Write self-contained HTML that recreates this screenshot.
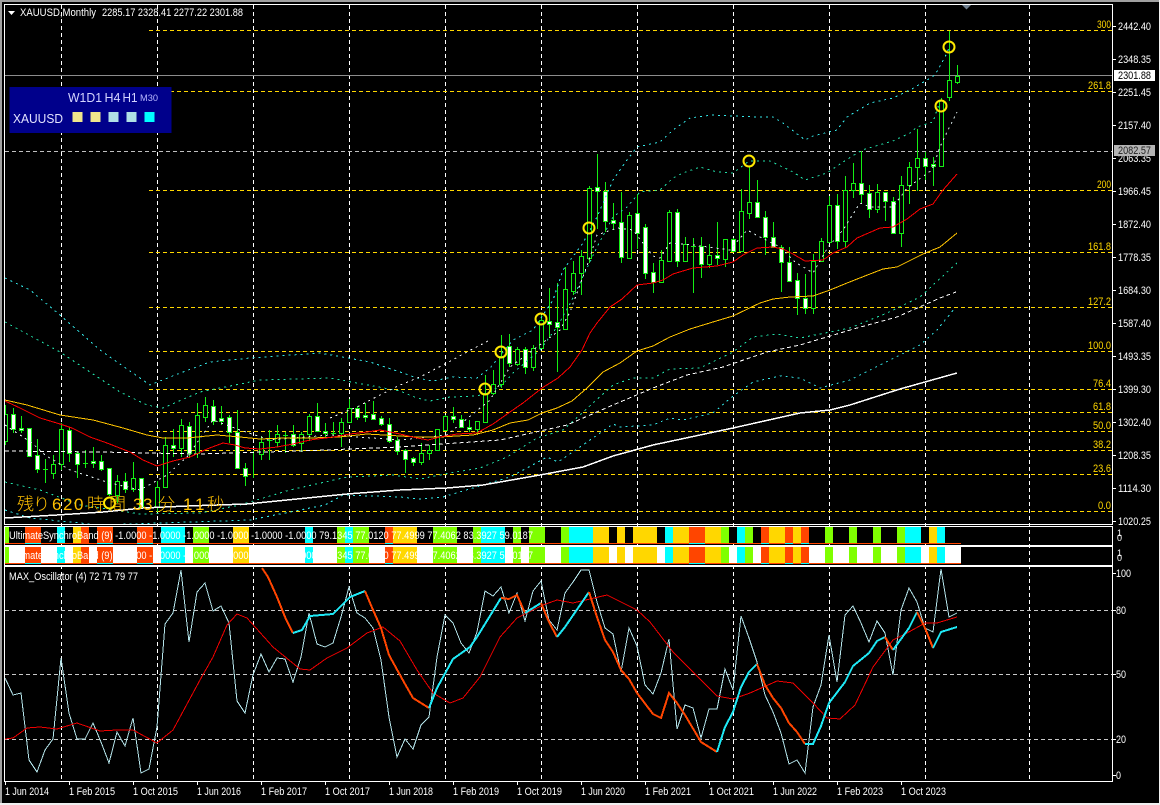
<!DOCTYPE html>
<html><head><meta charset="utf-8"><title>XAUUSD Monthly</title>
<style>
html,body{margin:0;padding:0;background:#000;width:1160px;height:805px;overflow:hidden}
svg{display:block;position:absolute;left:0;top:0}
text{font-family:"Liberation Sans","Noto Sans CJK JP",sans-serif;font-size:11px;fill:#fff}
.g{fill:#ffd700}
polyline{fill:none;shape-rendering:crispEdges}
.d{stroke-width:1;stroke-dasharray:2 4}
</style></head><body>
<svg width="1160" height="805" viewBox="0 0 1160 805" xmlns="http://www.w3.org/2000/svg">
<defs>
<clipPath id="m"><rect x="5" y="5" width="1107" height="519"/></clipPath>
<clipPath id="o"><rect x="5" y="567" width="1107" height="214"/></clipPath>
</defs>
<rect width="1160" height="805" fill="#000"/>
<rect width="1160" height="2" fill="#a0a0a0"/><rect width="2" height="805" fill="#a0a0a0"/>
<rect y="803" width="1160" height="2" fill="#f0f0f0"/><rect x="1159" width="1" height="805" fill="#f0f0f0"/>

<!-- vertical grid -->
<path d="M61.5 5V781M157.5 5V781M253.5 5V781M349.5 5V781M445.5 5V781M541.5 5V781M637.5 5V781M733.5 5V781M829.5 5V781M925.5 5V781M1029.5 5V781" stroke="#fff" stroke-dasharray="4 3" shape-rendering="crispEdges"/>
<!-- fib lines -->
<path d="M149 30.5H1112M149 91.5H1112M149 190.5H1112M149 252.5H1112M149 307.5H1112M149 351.5H1112M149 389.5H1112M149 412.5H1112M149 431.5H1112M149 450.5H1112M149 474.5H1112M149 511.5H1112" stroke="#ffd700" stroke-dasharray="4 3" shape-rendering="crispEdges"/>
<path d="M5 151.5H1112" stroke="#c0c0c0" stroke-dasharray="4 3" shape-rendering="crispEdges"/>
<path d="M5 75.5H1112" stroke="#8c8c8c" shape-rendering="crispEdges"/>

<g clip-path="url(#m)">
<!-- wicks -->
<path shape-rendering="crispEdges" stroke="#14ee14" fill="none" d="M5.5 405V445M13.5 408V433M21.5 416V433M29.5 428V457M37.5 439V473M45.5 459V483M53.5 455V479M61.5 423V470M69.5 427V462M77.5 451V478M85.5 450V468M93.5 447V468M101.5 455V471M109.5 468V496M117.5 475V503M125.5 473V493M133.5 462V492M141.5 478V508M157.5 481V512M165.5 437V487M173.5 429V457M181.5 419V457M189.5 422V458M197.5 403V458M205.5 397V422M213.5 400V425M221.5 406V425M229.5 415V443M237.5 410V469M245.5 463V486M253.5 451V478M261.5 436V460M269.5 430V460M277.5 425V447M285.5 432V453M293.5 425V447M301.5 432V452M309.5 414V441M317.5 403V432M325.5 423V438M333.5 422V435M341.5 418V447M349.5 399V423M357.5 406V420M365.5 403V422M373.5 401V420M381.5 416V426M389.5 418V443M397.5 437V455M405.5 449V473M413.5 457V466M421.5 443V465M429.5 445V460M437.5 429V451M445.5 415V431M453.5 407V423M461.5 415V428M469.5 420V432M477.5 421V435M485.5 375V422M493.5 370V395M501.5 335V388M509.5 334V367M517.5 347V366M525.5 347V374M533.5 345V371M541.5 315V348M549.5 288V338M557.5 283V372M565.5 267V330M573.5 261V295M581.5 250V295M589.5 186V263M597.5 154V229M605.5 182V232M613.5 203V230M621.5 192V263M629.5 212V258M637.5 194V249M645.5 224V279M653.5 263V293M661.5 250V283M669.5 210V262M677.5 209V267M685.5 237V262M693.5 238V293M701.5 237V278M709.5 244V268M717.5 222V265M725.5 239V267M733.5 238V252M741.5 189V252M749.5 167V219M757.5 180V218M765.5 211V255M773.5 222V248M781.5 245V292M789.5 247V282M797.5 273V315M805.5 274V314M813.5 254V314M821.5 238V262M829.5 196V243M837.5 194V249M845.5 176V247M853.5 163V198M861.5 151V204M869.5 185V218M877.5 184V213M885.5 192V221M893.5 197V234M901.5 176V247M909.5 162V204M917.5 129V191M925.5 152V180M933.5 157V186M941.5 98V167M949.5 31V101M957.5 65V84"/>
<!-- dojis -->
<path shape-rendering="crispEdges" stroke="#14ee14" fill="none" d="M43 469.5h5M83 463.5h5M267 440.5h5M283 435.5h5M331 433.5h5M691 246.5h5"/>
<!-- up bodies -->
<path shape-rendering="crispEdges" stroke="#14ee14" fill="#000" d="M3.5 414.5h4v27h-4zM51.5 464.5h4v9h-4zM59.5 429.5h4v35h-4zM115.5 481.5h4v14h-4zM131.5 478.5h4v11h-4zM155.5 487.5h4v20h-4zM163.5 445.5h4v42h-4zM179.5 425.5h4v23h-4zM195.5 415.5h4v38h-4zM203.5 405.5h4v12h-4zM259.5 442.5h4v12h-4zM275.5 434.5h4v8h-4zM299.5 434.5h4v9h-4zM307.5 416.5h4v18h-4zM339.5 422.5h4v11h-4zM347.5 408.5h4v14h-4zM419.5 453.5h4v9h-4zM427.5 450.5h4v3h-4zM435.5 429.5h4v21h-4zM443.5 416.5h4v14h-4zM475.5 421.5h4v8h-4zM483.5 393.5h4v29h-4zM491.5 384.5h4v9h-4zM499.5 356.5h4v28h-4zM515.5 349.5h4v15h-4zM531.5 348.5h4v19h-4zM539.5 320.5h4v28h-4zM563.5 289.5h4v40h-4zM571.5 273.5h4v18h-4zM579.5 256.5h4v17h-4zM587.5 188.5h4v70h-4zM627.5 215.5h4v43h-4zM659.5 260.5h4v22h-4zM667.5 212.5h4v49h-4zM683.5 244.5h4v17h-4zM707.5 255.5h4v9h-4zM723.5 239.5h4v20h-4zM739.5 211.5h4v40h-4zM747.5 202.5h4v11h-4zM811.5 261.5h4v47h-4zM819.5 241.5h4v20h-4zM827.5 205.5h4v37h-4zM843.5 190.5h4v51h-4zM851.5 183.5h4v7h-4zM875.5 192.5h4v17h-4zM899.5 185.5h4v48h-4zM907.5 167.5h4v18h-4zM915.5 158.5h4v9h-4zM939.5 100.5h4v66h-4zM947.5 80.5h4v17h-4zM955.5 76.5h4v6h-4z"/>
<!-- down bodies -->
<path shape-rendering="crispEdges" stroke="#14ee14" fill="#fff" d="M11.5 414.5h4v15h-4zM19.5 428.5h4v2h-4zM27.5 428.5h4v28h-4zM35.5 455.5h4v14h-4zM67.5 430.5h4v23h-4zM75.5 453.5h4v11h-4zM91.5 461.5h4v2h-4zM99.5 461.5h4v8h-4zM107.5 468.5h4v26h-4zM123.5 481.5h4v8h-4zM139.5 478.5h4v29h-4zM171.5 445.5h4v3h-4zM187.5 426.5h4v27h-4zM211.5 406.5h4v15h-4zM219.5 418.5h4v3h-4zM227.5 417.5h4v15h-4zM235.5 432.5h4v36h-4zM243.5 468.5h4v8h-4zM291.5 434.5h4v11h-4zM315.5 416.5h4v15h-4zM323.5 431.5h4v2h-4zM355.5 408.5h4v9h-4zM363.5 415.5h4v2h-4zM371.5 414.5h4v5h-4zM379.5 418.5h4v6h-4zM387.5 424.5h4v17h-4zM395.5 440.5h4v11h-4zM403.5 450.5h4v9h-4zM411.5 458.5h4v4h-4zM451.5 416.5h4v3h-4zM459.5 419.5h4v8h-4zM467.5 427.5h4v2h-4zM507.5 346.5h4v17h-4zM523.5 349.5h4v18h-4zM547.5 321.5h4v3h-4zM555.5 322.5h4v5h-4zM595.5 187.5h4v4h-4zM603.5 191.5h4v30h-4zM611.5 220.5h4v3h-4zM619.5 222.5h4v35h-4zM635.5 213.5h4v20h-4zM643.5 227.5h4v46h-4zM651.5 272.5h4v10h-4zM675.5 212.5h4v49h-4zM699.5 246.5h4v18h-4zM715.5 255.5h4v3h-4zM731.5 239.5h4v12h-4zM755.5 202.5h4v15h-4zM763.5 217.5h4v20h-4zM771.5 237.5h4v10h-4zM779.5 247.5h4v15h-4zM787.5 262.5h4v19h-4zM795.5 280.5h4v18h-4zM803.5 298.5h4v10h-4zM835.5 205.5h4v36h-4zM859.5 183.5h4v11h-4zM867.5 193.5h4v16h-4zM883.5 192.5h4v9h-4zM891.5 201.5h4v32h-4zM923.5 158.5h4v8h-4zM931.5 164.5h4v2h-4z"/>

<!-- bands -->
<polyline class="d" stroke="#33e6e6" points="5,278 30,290 60,315 100,350 150,385 175,375 210,362 250,358 320,353 370,362 400,372 417,378 433,381 453,377 477,378 490,368 513,340 533,330 553,300 563,270 583,243 597,217 613,180 627,160 637,147 660,142 673,130 690,118 712,115 760,117 773,117 783,123 805,140 813,136 837,130 847,117 870,103 893,98 910,90 927,80 935,75 945,57 949,48"/>
<polyline class="d" stroke="#22e0a8" points="5,322 60,352 120,392 147,405 163,408 200,392 260,380 330,378 400,391 417,398 430,401 450,397 477,396 490,392 502,385 513,373 540,350 557,327 571,302 597,247 613,217 627,207 640,192 660,190 673,178 683,173 700,167 717,172 733,173 749,161 770,161 793,172 805,180 827,173 843,162 862,150 893,141 910,133 917,127 933,122 941,98"/>
<polyline class="d" stroke="#fff" points="330,418 357,407 380,395 400,385 420,377 443,365 467,352 490,340"/>
<polyline class="d" stroke="#e0f0f0" points="5,425 32,443 45,455 70,470 110,483 140,490 167,475 187,457 213,420 240,430 270,440 330,435 400,440 447,435 490,400 510,367 560,330 570,312 588,263 597,235 617,228 633,230 653,256 660,258 670,243 693,245 730,250 747,230 760,237 780,247 795,262 813,273 828,247 843,230 860,203 870,207 893,207 907,188 932,170 940,147 947,132 957,112"/>
<polyline class="d" stroke="#fff" stroke-dasharray="4 3" style="stroke-dasharray:4 3" points="5,451 100,452 197,454 300,451 400,447 500,440 567,425 613,405 653,388 687,375 723,367 767,352 800,345 857,328 897,317 940,298 956,292"/>
<polyline class="d" stroke="#22e0a8" points="5,482 40,490 80,505 140,514 200,513 240,505 290,490 347,477 393,475 420,479 450,473 480,468 507,457 537,438 563,430 582,413 613,385 633,378 653,378 670,369 700,368 733,352 753,337 777,334 800,338 850,328 887,313 920,297 957,263"/>
<polyline class="d" stroke="#33e6e6" points="5,510 30,518 100,525 250,520 325,505 343,495 400,497 420,499 443,497 483,485 510,477 527,468 547,457 558,462 580,447 613,424 620,427 653,425 670,418 683,420 713,413 733,396 753,382 780,376 800,378 820,388 850,380 880,365 920,345 937,330 955,308"/>
<!-- MAs -->
<polyline stroke="#ffc400" points="5,400 27,405 60,415 93,420 123,428 147,435 163,438 187,438 217,435 240,437 260,439 283,438 310,438 340,437 367,434 400,436 417,437 440,437 473,435 493,430 510,423 528,420 542,413 557,408 572,401 587,388 603,372 620,363 637,351 653,346 670,337 690,329 713,322 733,316 760,303 773,299 790,297 813,296 830,290 847,283 870,274 883,269 897,267 923,254 940,247 957,233"/>
<polyline stroke="#ff0000" points="5,401 20,408 40,418 60,424 72,428 90,437 107,443 130,452 143,460 157,466 173,461 190,457 207,449 223,443 235,445 245,448 260,449 277,447 293,444 310,440 333,437 350,434 367,432 380,430 400,434 417,438 428,440 440,437 457,434 477,433 493,424 510,412 523,403 542,388 558,378 570,367 582,350 590,333 597,323 610,307 622,299 637,285 653,283 663,280 673,274 693,268 717,266 733,262 743,255 757,248 773,247 783,249 793,254 805,261 823,260 833,253 847,247 857,238 880,228 893,227 907,219 920,209 933,204 943,190 957,174"/>
<polyline stroke="#fff" stroke-width="1.5" points="5,518 57,515 103,512 143,508 187,506 247,504 307,498 347,494 400,490 447,488 483,485 540,475 583,467 613,456 653,445 733,428 800,413 830,410 850,405 900,389 957,373"/>
</g>

<!-- circles -->
<g fill="none" stroke="#ffe800" stroke-width="2">
<circle cx="109.5" cy="503" r="5.5"/><circle cx="485" cy="389" r="5.5"/><circle cx="501" cy="352" r="5.5"/><circle cx="541" cy="319" r="5.5"/><circle cx="589" cy="228" r="5.5"/><circle cx="749" cy="161" r="5.5"/><circle cx="941" cy="106" r="5.5"/><circle cx="949" cy="47" r="5.5"/>
</g>

<!-- countdown -->
<text x="17 33 52 63 74 87 109 133 143 158 183 195 207" y="510" style="font-size:17px;fill:#ffc000;font-weight:300">残り620時間33分11秒</text>

<!-- indicator bars -->
<rect x="5" y="547" width="956" height="16" fill="#fff"/>
<rect x="5" y="527" width="956" height="16" fill="#000"/>
<g id="cols" shape-rendering="crispEdges">
<path fill="#7fff00" d="M5 527h4v16h-4zM193 527h16v16h-16zM337 527h8v16h-8zM353 527h16v16h-16zM433 527h24v16h-24zM473 527h8v16h-8zM513 527h8v16h-8zM529 527h16v16h-16zM561 527h8v16h-8zM721 527h8v16h-8zM745 527h8v16h-8zM825 527h8v16h-8zM849 527h8v16h-8zM873 527h8v16h-8zM897 527h8v16h-8z"/>
<path fill="#ff4500" d="M25 527h16v16h-16zM81 527h8v16h-8zM97 527h16v16h-16zM137 527h16v16h-16zM385 527h8v16h-8zM689 527h16v16h-16zM761 527h8v16h-8zM785 527h8v16h-8zM801 527h8v16h-8z"/>
<path fill="#00ffff" d="M57 527h8v16h-8zM161 527h24v16h-24zM305 527h8v16h-8zM345 527h8v16h-8zM481 527h24v16h-24zM569 527h24v16h-24zM665 527h8v16h-8zM737 527h8v16h-8zM905 527h16v16h-16zM937 527h8v16h-8z"/>
<path fill="#ffd700" d="M73 527h8v16h-8zM233 527h16v16h-16zM393 527h24v16h-24zM593 527h16v16h-16zM617 527h8v16h-8zM633 527h24v16h-24zM673 527h16v16h-16zM705 527h16v16h-16zM769 527h16v16h-16zM793 527h8v16h-8zM929 527h8v16h-8z"/>
<rect x="5" y="543" width="956" height="1" fill="#ff4500"/>
<path fill="#00ffff" d="M25 543h16v1h-16zM97 543h16v1h-16zM137 543h16v1h-16zM385 543h8v1h-8zM689 543h16v1h-16zM761 543h8v1h-8zM785 543h8v1h-8zM801 543h8v1h-8z"/>
</g>
<use href="#cols" y="20"/>
<text x="9" y="539" textLength="524" lengthAdjust="spacingAndGlyphs">UltimateSynchroBand (9) -1.0000 -1.0000 -1.0000 -1.0000 -1.0000 -1.0000 79.1345 77.0120 77.4999 77.4062 83.3927 59.0187</text>
<text x="9" y="559" textLength="524" lengthAdjust="spacingAndGlyphs">UltimateSynchroBand (9) -1.0000 -1.0000 -1.0000 -1.0000 -1.0000 -1.0000 79.1345 77.0120 77.4999 77.4062 83.3927 59.0187</text>

<!-- oscillator -->
<path d="M5 610.5H1112M5 674.5H1112M5 739.5H1112" stroke="#c8c8c8" stroke-dasharray="4 3" shape-rendering="crispEdges"/>
<g clip-path="url(#o)">
<polyline stroke="#b4e4ea" points="5,678 13,695 21,693 29,760 37,772 45,750 53,739 61,658 69,713 77,739 85,739 93,723 101,742 109,763 117,732 125,746 133,718 141,773 149,769 157,727 165,624 173,613 181,570 189,642 197,592 205,583 213,611 221,606 229,623 237,701 245,713 253,675 261,654 269,672 277,658 285,659 293,682 301,657 309,613 317,644 325,647 333,643 341,617 349,587 357,613 365,618 373,628 381,660 389,717 397,757 405,739 413,749 421,725 429,717 437,657 445,615 453,623 461,643 469,653 477,632 485,591 493,596 501,587 509,613 517,593 525,621 533,591 541,581 549,620 557,630 565,593 573,582 581,570 589,570 597,602 605,628 613,634 621,672 629,628 637,646 645,685 653,694 661,673 669,639 677,729 685,705 693,708 701,738 709,709 717,709 725,669 733,690 741,616 749,638 757,662 765,695 773,712 781,733 789,764 797,760 805,773 813,707 821,685 829,635 837,682 845,615 853,606 861,623 869,642 877,621 885,633 893,675 901,610 909,588 917,602 925,628 933,632 941,569 949,617 957,613"/>
<polyline stroke="#f00000" points="5,739 13,738 27,728 40,727 57,729 77,723 100,731 117,730 133,730 157,743 173,730 200,680 213,657 227,625 237,614 247,618 273,647 300,669 310,670 327,658 347,648 367,633 383,627 400,641 417,670 433,693 450,703 463,698 480,677 500,637 517,618 543,605 557,600 573,603 607,595 637,610 650,622 673,652 693,672 717,696 733,699 750,693 777,681 793,683 813,703 827,718 840,719 855,705 873,667 893,640 907,633 925,623 937,623 957,617"/>
<g stroke-width="2">
<polyline stroke="#ff4500" points="262,568 268,577 277,597 285,617 293,633"/>
<polyline stroke="#1fe8f5" points="293,633 302,630 310,616 333,614 350,597 365,591"/>
<polyline stroke="#ff4500" points="365,591 373,610 381,628 389,655 400,675 405,684 413,698 429,708"/>
<polyline stroke="#1fe8f5" points="429,708 437,688 453,659 470,647 477,637 501,598"/>
<polyline stroke="#ff4500" points="501,598 509,599 517,595 525,613"/>
<polyline stroke="#1fe8f5" points="525,613 541,603"/>
<polyline stroke="#ff4500" points="541,603 549,622 557,637"/>
<polyline stroke="#1fe8f5" points="557,637 565,627 589,592"/>
<polyline stroke="#ff4500" points="589,592 597,617 605,640 613,652 621,670 629,679 637,693 653,714 661,718 669,693 677,703 685,715 701,742 717,752"/>
<polyline stroke="#1fe8f5" points="717,752 725,727 733,712 741,687 749,672 757,664"/>
<polyline stroke="#ff4500" points="757,664 765,685 773,698 781,708 789,723 797,732 805,744"/>
<polyline stroke="#1fe8f5" points="805,744 813,744 821,726 829,703 845,682 853,666 869,653 877,641 885,637"/>
<polyline stroke="#ff4500" points="885,637 893,650"/>
<polyline stroke="#1fe8f5" points="893,650 909,628 917,612"/>
<polyline stroke="#ff4500" points="917,612 925,628 933,648"/>
<polyline stroke="#1fe8f5" points="933,648 941,632 957,627"/>
</g>
</g>
<text x="9" y="580" textLength="129" lengthAdjust="spacingAndGlyphs">MAX_Oscillator (4) 72 71 79 77</text>

<!-- frames -->
<g fill="none" stroke="#fff" shape-rendering="crispEdges">
<rect x="4.5" y="4.5" width="1108" height="520"/>
<rect x="4.5" y="526.5" width="1108" height="19"/>
<rect x="4.5" y="546.5" width="1108" height="19"/>
<rect x="4.5" y="566.5" width="1108" height="215"/>
<path d="M1113 26.5h3M1113 59.5h3M1113 92.5h3M1113 125.5h3M1113 158.5h3M1113 191.5h3M1113 224.5h3M1113 257.5h3M1113 290.5h3M1113 323.5h3M1113 356.5h3M1113 389.5h3M1113 422.5h3M1113 455.5h3M1113 488.5h3M1113 521.5h3M1113 573.5h3M1113 610.5h3M1113 674.5h3M1113 739.5h3M1113 775.5h3"/>
<path d="M5.5 782v3M69.5 782v3M133.5 782v3M197.5 782v3M261.5 782v3M325.5 782v3M389.5 782v3M453.5 782v3M517.5 782v3M581.5 782v3M645.5 782v3M709.5 782v3M773.5 782v3M837.5 782v3M901.5 782v3"/>
</g>

<!-- header -->
<path d="M8 11h7l-3.5 4z" fill="#fff"/>
<text x="20" y="16" textLength="76" lengthAdjust="spacingAndGlyphs">XAUUSD,Monthly</text>
<text x="102" y="16" textLength="141" lengthAdjust="spacingAndGlyphs">2285.17 2328.41 2277.22 2301.88</text>
<path d="M962 5h9l-4.500 4.500z" fill="#708090"/>

<!-- legend -->
<rect x="9.500" y="87" width="162" height="46" fill="#00008b"/>
<text x="68" y="102" textLength="34" lengthAdjust="spacingAndGlyphs" style="font-size:13px;fill:#d4d4ff">W1D1</text>
<text x="104.500" y="102" textLength="16" lengthAdjust="spacingAndGlyphs" style="font-size:13px;fill:#d4d4ff">H4</text>
<text x="122.500" y="102" textLength="15" lengthAdjust="spacingAndGlyphs" style="font-size:13px;fill:#d4d4ff">H1</text>
<text x="140" y="101" textLength="18" lengthAdjust="spacingAndGlyphs" style="font-size:9.500px;fill:#b8b8ff">M30</text>
<text x="13" y="123" textLength="50" lengthAdjust="spacingAndGlyphs" style="font-size:13px;fill:#e4e4ff">XAUUSD</text>
<rect x="72.500" y="112" width="10" height="10" fill="#f0e68c"/>
<rect x="90.500" y="112" width="10" height="10" fill="#f0e68c"/>
<rect x="108.500" y="112" width="10" height="10" fill="#b0e0e6"/>
<rect x="126.500" y="112" width="10" height="10" fill="#b0e0e6"/>
<rect x="144.500" y="112" width="10" height="10" fill="#00ffff"/>

<!-- fib labels -->
<text class="g" x="1097" y="28" textLength="14" lengthAdjust="spacingAndGlyphs">300</text>
<text class="g" x="1088" y="89" textLength="23" lengthAdjust="spacingAndGlyphs">261.8</text>
<text class="g" x="1097" y="188" textLength="14" lengthAdjust="spacingAndGlyphs">200</text>
<text class="g" x="1088" y="250" textLength="23" lengthAdjust="spacingAndGlyphs">161.8</text>
<text class="g" x="1088" y="305" textLength="23" lengthAdjust="spacingAndGlyphs">127.2</text>
<text class="g" x="1088" y="349" textLength="23" lengthAdjust="spacingAndGlyphs">100.0</text>
<text class="g" x="1093" y="387" textLength="18" lengthAdjust="spacingAndGlyphs">76.4</text>
<text class="g" x="1093" y="410" textLength="18" lengthAdjust="spacingAndGlyphs">61.8</text>
<text class="g" x="1093" y="429" textLength="18" lengthAdjust="spacingAndGlyphs">50.0</text>
<text class="g" x="1093" y="448" textLength="18" lengthAdjust="spacingAndGlyphs">38.2</text>
<text class="g" x="1093" y="472" textLength="18" lengthAdjust="spacingAndGlyphs">23.6</text>
<text class="g" x="1098" y="509" textLength="13" lengthAdjust="spacingAndGlyphs">0.0</text>

<!-- price axis -->
<text x="1118" y="30" textLength="33" lengthAdjust="spacingAndGlyphs">2442.40</text>
<text x="1118" y="63" textLength="33" lengthAdjust="spacingAndGlyphs">2348.35</text>
<text x="1118" y="96" textLength="33" lengthAdjust="spacingAndGlyphs">2251.45</text>
<text x="1118" y="129" textLength="33" lengthAdjust="spacingAndGlyphs">2157.40</text>
<text x="1118" y="162" textLength="33" lengthAdjust="spacingAndGlyphs">2063.35</text>
<text x="1118" y="195" textLength="33" lengthAdjust="spacingAndGlyphs">1966.45</text>
<text x="1118" y="228" textLength="33" lengthAdjust="spacingAndGlyphs">1872.40</text>
<text x="1118" y="261" textLength="33" lengthAdjust="spacingAndGlyphs">1778.35</text>
<text x="1118" y="294" textLength="33" lengthAdjust="spacingAndGlyphs">1684.30</text>
<text x="1118" y="327" textLength="33" lengthAdjust="spacingAndGlyphs">1587.40</text>
<text x="1118" y="360" textLength="33" lengthAdjust="spacingAndGlyphs">1493.35</text>
<text x="1118" y="393" textLength="33" lengthAdjust="spacingAndGlyphs">1399.30</text>
<text x="1118" y="426" textLength="33" lengthAdjust="spacingAndGlyphs">1302.40</text>
<text x="1118" y="459" textLength="33" lengthAdjust="spacingAndGlyphs">1208.35</text>
<text x="1118" y="492" textLength="33" lengthAdjust="spacingAndGlyphs">1114.30</text>
<text x="1118" y="525" textLength="33" lengthAdjust="spacingAndGlyphs">1020.25</text>
<rect x="1114" y="70" width="41" height="11" fill="#fff"/>
<text x="1118" y="79" textLength="33" lengthAdjust="spacingAndGlyphs" style="fill:#000">2301.88</text>
<rect x="1114" y="145" width="41" height="11" fill="#b4b4b4"/>
<text x="1118" y="154" textLength="33" lengthAdjust="spacingAndGlyphs" style="fill:#222">2082.57</text>

<text x="1117" y="536" style="font-size:9px">1</text><text x="1117" y="541" style="font-size:9px">0</text>
<text x="1117" y="556" style="font-size:9px">1</text><text x="1117" y="561" style="font-size:9px">0</text>
<text x="1116" y="577" textLength="15" lengthAdjust="spacingAndGlyphs">100</text>
<text x="1116" y="614" textLength="10" lengthAdjust="spacingAndGlyphs">80</text>
<text x="1116" y="678" textLength="10" lengthAdjust="spacingAndGlyphs">50</text>
<text x="1116" y="743" textLength="10" lengthAdjust="spacingAndGlyphs">20</text>
<text x="1116" y="779" textLength="5" lengthAdjust="spacingAndGlyphs">0</text>

<!-- time axis -->
<text x="5" y="795" textLength="44" lengthAdjust="spacingAndGlyphs">1 Jun 2014</text>
<text x="69" y="795" textLength="46" lengthAdjust="spacingAndGlyphs">1 Feb 2015</text>
<text x="133" y="795" textLength="45" lengthAdjust="spacingAndGlyphs">1 Oct 2015</text>
<text x="197" y="795" textLength="44" lengthAdjust="spacingAndGlyphs">1 Jun 2016</text>
<text x="261" y="795" textLength="46" lengthAdjust="spacingAndGlyphs">1 Feb 2017</text>
<text x="325" y="795" textLength="45" lengthAdjust="spacingAndGlyphs">1 Oct 2017</text>
<text x="389" y="795" textLength="44" lengthAdjust="spacingAndGlyphs">1 Jun 2018</text>
<text x="453" y="795" textLength="46" lengthAdjust="spacingAndGlyphs">1 Feb 2019</text>
<text x="517" y="795" textLength="45" lengthAdjust="spacingAndGlyphs">1 Oct 2019</text>
<text x="581" y="795" textLength="44" lengthAdjust="spacingAndGlyphs">1 Jun 2020</text>
<text x="645" y="795" textLength="46" lengthAdjust="spacingAndGlyphs">1 Feb 2021</text>
<text x="709" y="795" textLength="45" lengthAdjust="spacingAndGlyphs">1 Oct 2021</text>
<text x="773" y="795" textLength="44" lengthAdjust="spacingAndGlyphs">1 Jun 2022</text>
<text x="837" y="795" textLength="46" lengthAdjust="spacingAndGlyphs">1 Feb 2023</text>
<text x="901" y="795" textLength="45" lengthAdjust="spacingAndGlyphs">1 Oct 2023</text>
</svg>
</body></html>
